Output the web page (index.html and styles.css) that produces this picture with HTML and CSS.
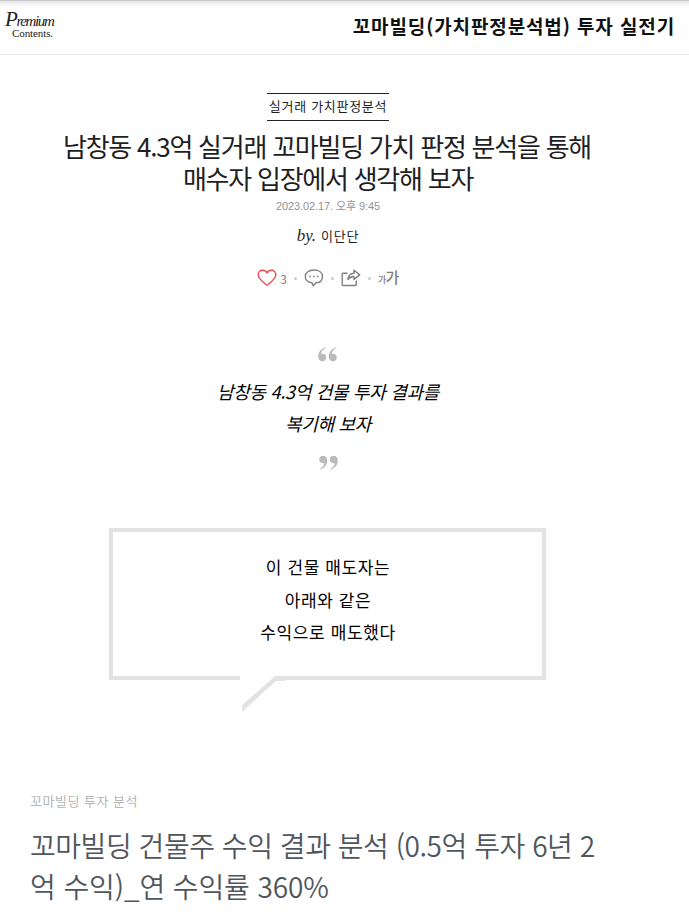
FILE: index.html
```html
<!DOCTYPE html>
<html lang="ko">
<head>
<meta charset="utf-8">
<title>꼬마빌딩(가치판정분석법) 투자 실전기</title>
<link rel="stylesheet" href="styles.css">
</head>
<body>
<header class="topbar">
  <div class="logo"><span class="logo-main"><span class="logo-cap">P</span>remium</span><span class="logo-sub">Contents.</span></div>
  <div class="channel">꼬마빌딩(가치판정분석법) 투자 실전기</div>
</header>
<main>
  <section class="intro">
    <div class="category">실거래 가치판정분석</div>
    <h1 class="title"><span class="title-first">남창동 4.3억 실거래 꼬마빌딩 가치 판정 분석을 통해</span><span class="title-second">매수자 입장에서 생각해 보자</span></h1>
    <div class="date">2023.02.17. <span>오후</span> 9:45</div>
    <div class="author"><span class="by">by.</span><span class="name">이단단</span></div>
    <div class="actions">
      <svg class="heart" width="20" height="18" viewBox="0 0 20 18"><path d="M10 16.3 C7 14 1.2 10 1.2 5.8 C1.2 3 3.2 1.2 5.5 1.2 C7.6 1.2 9.2 2.3 10 4 C10.800 2.3 12.400 1.200 14.500 1.200 C16.800 1.200 18.800 3 18.800 5.800 C18.800 10 13 14 10 16.300 Z"/></svg>
      <span class="count">3</span>
      <i class="dot"></i>
      <svg class="comment" width="20" height="18" viewBox="0 0 20 18"><path d="M10 1 C15 1 18.500 3.500 18.500 7.400 C18.500 11.300 15.500 13.500 12 13.800 L9.200 16.700 L7.900 13.700 C4 13.200 1.300 11 1.300 7.400 C1.300 3.500 5 1 10 1 Z"/><path class="dots" d="M5.300 6.700h1.600v1.600h-1.600z M9.100 6.700h1.600v1.600h-1.600z M12.900 6.700h1.600v1.600h-1.600z"/></svg>
      <i class="dot"></i>
      <svg class="share" width="20" height="18" viewBox="0 0 20 18"><path d="M6.500 4.200H2.200Q1.200 4.200 1.200 5.200V15.500Q1.200 16.500 2.200 16.500H14.300Q15.300 16.500 15.300 15.500V11.500"/><path d="M7 10.500C7.200 6.700 9.200 4.400 13 4.200V1.300L18.700 5.900L13 10.400V7.500C10.300 7.400 8.500 8.300 7 10.500Z"/></svg>
      <i class="dot"></i>
      <span class="size"><small>가</small>가</span>
    </div>
  </section>
  <blockquote class="quote">
    <svg class="mark" width="20" height="15" viewBox="0 0 20 15"><path id="q" d="M8.200 0.500C4.500 3 3.400 4.800 3.300 7C6.100 6.200 8.300 7.900 8.300 10.400C8.300 12.700 6.700 14.300 4.400 14.300C1.700 14.300 0.200 12.200 0.200 9.200C0.200 4.800 3.500 1.200 8.200 0.200Z"/><use href="#q" x="10.500"/></svg>
    <p class="quote-line first">남창동 4.3억 건물 투자 결과를</p>
    <p class="quote-line second">복기해 보자</p>
    <svg class="mark closing" width="20" height="15" viewBox="0 0 20 15"><g transform="rotate(180 10 7.500)"><use href="#q"/><use href="#q" x="10.500"/></g></svg>
  </blockquote>
  <section class="bubble">
    <p>이 건물 매도자는</p>
    <p>아래와 같은</p>
    <p>수익으로 매도했다</p>
    <svg class="tail" width="45" height="36" viewBox="0 0 45 36"><path class="gap" d="M0 0H35V5H0z"/><path class="edge" d="M35 0H45V5H36L2 36V29Z"/></svg>
  </section>
  <section class="summary">
    <div class="eyebrow">꼬마빌딩 투자 분석</div>
    <h2><span class="sum-first">꼬마빌딩 건물주 수익 결과 분석 (0.5억 투자 6년 2</span><span class="sum-second">억 수익)_연 수익률 360%</span></h2>
  </section>
</main>
</body>
</html>
```
FILE: styles.css
```css
* { box-sizing: border-box; }
body {
  margin: 0;
  width: 689px;
  height: 917px;
  overflow: hidden;
  background: #fff;
  color: #1e1e23;
  font-family: "Noto Sans CJK KR", sans-serif;
  white-space: nowrap;
}
h1, h2, p, blockquote { margin: 0; font-weight: 400; }
svg { display: block; }

.topbar {
  display: flex;
  justify-content: space-between;
  height: 55px;
  padding: 0 14px 0 5px;
  border-top: 1px solid #c8c8ca;
  border-bottom: 1px solid #e8e8e8;
  background: linear-gradient(#e6e6e8, #fff 6px);
}
.logo { display: flex; flex-direction: column; padding-top: 10px; color: #222; }
.logo-main {
  height: 17px;
  font: italic 15px/17px "Liberation Serif", serif;
  letter-spacing: -1.4px;
}
.logo-cap { font-size: 21px; }
.logo-sub {
  margin-left: 7px;
  font: 11px/11px "Liberation Serif", serif;
  letter-spacing: -0.1px;
}
.channel {
  color: #111;
  font-size: 19px;
  font-weight: 700;
  line-height: 50px;
  letter-spacing: 0.88px;
}

.intro { display: flex; flex-direction: column; align-items: center; width: 656px; height: 290px; padding-top: 38px; }
.category {
  height: 28px;
  padding: 0 2px;
  border-top: 1px solid #222;
  border-bottom: 1px solid #222;
  font-size: 13px;
  line-height: 23px;
  letter-spacing: 0.7px;
}
.title { margin-top: 9px; font-size: 26px; line-height: 32px; text-align: center; }
.title span { display: block; }
.title-first, .title-second { letter-spacing: -1.25px; }
.title-first { position: relative; left: -1px; }
.date { color: #929294; font: 11px/14px "Liberation Sans", "Noto Sans CJK KR", sans-serif; margin-top: 5px; letter-spacing: -0.1px; }
.author { display: flex; align-items: center; gap: 5px; height: 20px; margin-top: 13px; }
.by { font: italic 17px/20px "Liberation Serif", serif; }
.name { font-size: 13px; line-height: 20px; letter-spacing: 0.8px; }
.actions { display: flex; align-items: center; height: 20px; margin-top: 22px; color: #808080; }
.actions svg { fill: none; stroke: #808080; stroke-width: 1.4; stroke-linejoin: round; }
.actions .heart { stroke: #ef4a50; }
.actions .dots { fill: #808080; stroke: none; }
.count { margin-left: 3px; font-size: 12px; }
.dot { width: 3px; height: 3px; margin: 0 7px; border-radius: 50%; background: #ccc; }
.size { font-size: 15px; line-height: 18px; font-weight: 500; letter-spacing: -0.6px; }
.size small { font-size: 9px; }

.quote { display: flex; flex-direction: column; align-items: center; width: 656px; height: 183px; padding-top: 2px; color: #000; }
.mark { fill: #bbb; }
.quote-line { font-size: 18px; font-style: italic; line-height: 32px; letter-spacing: -0.3px; }
.quote-line.first { margin-top: 13px; }
.closing { margin-top: 16px; }

.bubble {
  position: relative;
  width: 437px;
  height: 152px;
  margin-left: 109px;
  padding: 19px 0 0 1px;
  border: 4px solid #e3e3e3;
  color: #000;
  font-size: 17px;
  font-weight: 500;
  line-height: 32.500px;
  letter-spacing: 0.6px;
  text-align: center;
}
.tail { position: absolute; left: 127px; top: 144px; }
.gap { fill: #fff; }
.edge { fill: #e3e3e3; }

.summary { padding: 111px 0 0 30px; }
.eyebrow { color: #b4b6b8; font-size: 13px; line-height: 20px; letter-spacing: 0.5px; }
.summary h2 { margin-top: 14px; color: #50565d; font-size: 28px; font-weight: 350; line-height: 41px; }
.summary h2 span { display: block; }
.sum-first { letter-spacing: -0.46px; }
.sum-second { letter-spacing: -0.1px; }
```
